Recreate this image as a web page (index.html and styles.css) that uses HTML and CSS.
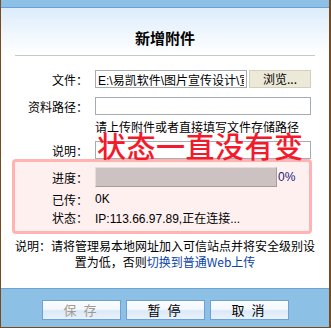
FILE: index.html
```html
<!DOCTYPE html>
<html lang="zh-CN">
<head>
    <meta charset="UTF-8">
    <title>新增附件</title>
    <link rel="stylesheet" href="styles.css">
</head>
<body>
    <div class="dialog">
        <div class="topbar"></div>
        <div class="title-area">
            <h1>新增附件</h1>
        </div>
        <div class="rule"></div>

        <div class="form">
            <div class="row">
                <label>文件：</label>
                <div class="file-field">
                    <input type="text" class="file-input" value="E:\易凯软件\图片宣传设计\宣传图片.jpg">
                    <button class="browse">浏览...</button>
                </div>
            </div>
            <div class="row">
                <label>资料路径：</label>
                <input type="text" class="text-input">
            </div>
            <div class="row hint-row">
                <span></span>
                <p class="hint">请上传附件或者直接填写文件存储路径</p>
            </div>
            <div class="row">
                <label>说明：</label>
                <div class="desc-field">
                    <input type="text" class="text-input">
                    <span class="annotation">状态一直没有变</span>
                </div>
            </div>
        </div>

        <div class="progress-box">
            <div class="prow bar-row">
                <label>进度：</label>
                <div class="bar"></div>
                <span class="percent">0%</span>
            </div>
            <div class="prow">
                <label>已传：</label>
                <span>0K</span>
            </div>
            <div class="prow">
                <label>状态：</label>
                <span>IP:113.66.97.89,正在连接...</span>
            </div>
        </div>

        <p class="note">说明：请将管理易本地网址加入可信站点并将安全级别设<br>置为低，否则<a href="#">切换到普通Web上传</a></p>

        <div class="footer">
            <button class="btn" disabled>保 存</button>
            <button class="btn">暂 停</button>
            <button class="btn">取 消</button>
        </div>
    </div>
</body>
</html>
```

FILE: styles.css
```css
/* General */
body {
    margin: 0;
    padding: 0;
    background: #ffffff;
    font-family: "Liberation Sans", "Noto Sans CJK SC", sans-serif;
    font-size: 12px;
    color: #000;
}

.dialog {
    width: 331px;
    height: 328px;
    box-sizing: border-box;
    border-left: 1px solid #7a4a1f;
    border-right: 2px solid #7a4a1f;
    border-bottom: 1px solid #7a4a1f;
    display: flex;
    flex-direction: column;
    background: #fff;
}

/* Header */
.topbar {
    height: 7px;
    background: #8dc0e6;
    border-bottom: 1px solid #6b9fcf;
}

.title-area {
    height: 47px;
    background: linear-gradient(to bottom, #dcecfb 0%, #eef6fd 50%, #ffffff 100%);
    text-align: center;
}

.title-area h1 {
    margin: 0;
    padding-top: 20px;
    font-size: 15px;
    line-height: 20px;
    font-weight: bold;
    font-family: "Noto Sans CJK SC", sans-serif;
}

.rule {
    height: 1px;
    margin: 0 14px;
    background: #c8c8c8;
}

/* Form rows */
.form {
    padding-top: 14px;
    display: flex;
    flex-direction: column;
    gap: 9px;
}

.row {
    display: grid;
    grid-template-columns: 87px 216px;
    column-gap: 7px;
    align-items: center;
    height: 18px;
}

.row label {
    text-align: right;
}

.hint-row {
    height: 16px;
    margin-top: -4px;
    margin-bottom: -4px;
}

.hint {
    margin: 0;
    line-height: 16px;
}

.file-field {
    display: flex;
    gap: 2px;
}

input {
    font-family: "Liberation Sans", "Noto Sans CJK SC", sans-serif;
    font-size: 12px;
    outline: none;
}

.file-input {
    width: 152px;
    height: 18px;
    box-sizing: border-box;
    border: 1px solid #a5acb2;
    padding: 0 2px;
}

.browse {
    width: 62px;
    height: 18px;
    box-sizing: border-box;
    border: 1px solid #d3cfbd;
    background: #ece9d8;
    font-family: "Noto Sans CJK SC", sans-serif;
    font-size: 12px;
    padding: 0;
    line-height: 16px;
}

.text-input {
    width: 216px;
    height: 18px;
    box-sizing: border-box;
    border: 1px solid #a5acb2;
}

.desc-field {
    position: relative;
    height: 18px;
}

/* red remark written over the screenshot */
.annotation {
    position: absolute;
    left: 2px;
    top: -9px;
    font-size: 29px;
    line-height: 26px;
    letter-spacing: 0.5px;
    font-weight: 500;
    color: #f41a2c;
    font-family: "Noto Sans CJK SC", sans-serif;
    white-space: nowrap;
}

/* Progress box */
.progress-box {
    margin: 0 0 0 11px;
    width: 300px;
    box-sizing: border-box;
    border: 3px solid #ffb3b3;
    border-radius: 4px;
    background: #fff0f0;
    padding: 5px 0;
}

.prow {
    display: flex;
    align-items: center;
    height: 18px;
}

.prow label {
    width: 73px;
    text-align: right;
    margin-right: 7px;
}

.bar-row {
    height: 20px;
    margin-bottom: 3px;
}

.bar {
    width: 182px;
    height: 20px;
    box-sizing: border-box;
    background: #cdc2c2;
    border: 1px solid;
    border-color: #e6ddd6 #a89e98 #a89e98 #e6ddd6;
}

.percent {
    color: #1c1c78;
    margin-left: 1px;
}

/* Bottom note */
.note {
    margin: 4px 0 0;
    text-align: center;
    line-height: 16px;
    font-family: "Noto Sans CJK SC", sans-serif;
}

.note a {
    color: #0b44a8;
    text-decoration: none;
}

/* Footer */
.footer {
    margin-top: auto;
    height: 39px;
    box-sizing: border-box;
    background: #8dc0e5;
    border-top: 1px solid #6ea3d4;
    padding-top: 11px;
    display: flex;
    justify-content: center;
    gap: 5px;
}

.btn {
    width: 79px;
    height: 20px;
    box-sizing: border-box;
    border: 1px solid #6f9fd6;
    background: linear-gradient(to bottom, #fbfdff 0%, #f3f8fd 45%, #dbe9f6 55%, #e9f2fb 100%);
    font-family: "Noto Sans CJK SC", sans-serif;
    font-size: 13px;
    line-height: 16px;
    padding: 0;
    color: #000;
    letter-spacing: 2px;
}

.btn:disabled {
    color: #a59a8e;
}
```
